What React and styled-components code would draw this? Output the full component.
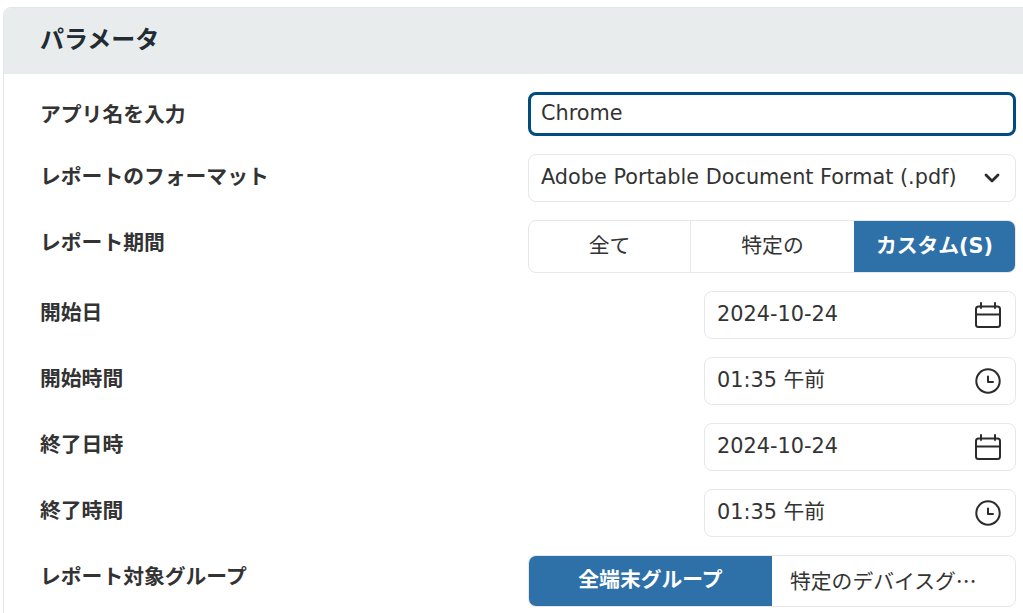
import React from 'react'
import styled, {createGlobalStyle} from 'styled-components'

const GlobalStyle = createGlobalStyle`
  html, body {
    margin: 0;
    height: 100%;
    overflow: hidden;
    background: #fff;
  }
  body {
    font-family: "DejaVu Sans", "Noto Sans CJK JP", sans-serif;
    color: #333;
  }
`;

const Panel = styled.section`
  margin: 7px -12px 0 3px;
  border: 1px solid #e4e7e9;
  border-radius: 8px 8px 0 0;
  background: #fff;
`;

const PanelHeader = styled.header`
  height: 66px;
  display: flex;
  align-items: center;
  padding: 0 0 8px 36px;
  box-sizing: border-box;
  background: #e9eced;
  border-radius: 7px 7px 0 0;
`;

const PanelTitle = styled.h2`
  margin: 0;
  font-size: 24px;
  font-weight: 700;
  color: #212b32;
`;

const PanelBody = styled.div`
  display: flex;
  flex-direction: column;
  gap: 18px;
  padding: 18px 18px 18px 36px;
`;

const Row = styled.div`
  display: flex;
  justify-content: space-between;
  align-items: flex-start;
`;

const Label = styled.label`
  font-size: 20.8px;
  font-weight: 700;
  line-height: 30px;
  padding-top: ${({$loose}) => ($loose ? '8px' : '7px')};
  color: #333;
`;

const Control = styled.div`
  width: ${({$narrow}) => ($narrow ? '312px' : '488px')};
`;

const TextInput = styled.input`
  box-sizing: border-box;
  display: block;
  width: 100%;
  height: 44px;
  padding: 0 10px 3px;
  border: 3px solid #004b7f;
  border-radius: 8px;
  outline: none;
  background: #fff;
  font: inherit;
  font-size: 20.8px;
  color: #333;
`;

const Field = styled.div`
  box-sizing: border-box;
  height: 48px;
  display: flex;
  align-items: center;
  justify-content: space-between;
  padding: 0 13px 0 12px;
  border: 1px solid #e5e7ea;
  border-radius: 8px;
  background: #fff;
  font-size: 20.8px;
  color: #333;
  white-space: nowrap;
`;

const FieldText = styled.span`
  line-height: 28px;
  padding-bottom: 3px;
`;

const SegmentGroup = styled.div`
  box-sizing: border-box;
  height: ${({$tall}) => ($tall ? '53px' : '52px')};
  line-height: ${({$tall}) => ($tall ? '50px' : '48px')};
  display: grid;
  grid-template-columns: ${({$columns}) => $columns};
  border: 1px solid #e5e7ea;
  border-radius: 8px;
  overflow: hidden;
  background: #fff;
`;

const Segment = styled.div`
  box-sizing: border-box;
  min-width: 0;
  padding: 0 18px;
  font-size: 20.8px;
  text-align: center;
  white-space: nowrap;
  overflow: hidden;
  text-overflow: ellipsis;
  color: ${({$active}) => ($active ? '#fff' : '#333')};
  background: ${({$active}) => ($active ? '#2e71a8' : 'transparent')};
  font-weight: ${({$active}) => ($active ? 700 : 400)};
  border-right: ${({$divided}) => ($divided ? '1px solid #e5e7ea' : 'none')};
`;

const Truncated = styled(Segment)`
  font-family: "Noto Sans CJK JP", sans-serif;
  text-align: left;
`;

const IconSvg = styled.svg`
  display: block;
  flex: none;
  fill: none;
  stroke: #2b2b2b;
  stroke-width: 2;
  stroke-linecap: round;
  stroke-linejoin: round;
`;

const ChevronSvg = styled(IconSvg)`
  margin-right: 2px;
  stroke-width: 2.8;
`;

const Chevron = () => (
    <ChevronSvg width="16" height="10" viewBox="0 0 16 10">
        <path d="M2 2l6 6 6-6"/>
    </ChevronSvg>
);

const CalendarIcon = () => (
    <IconSvg width="28" height="28" viewBox="0 0 28 28">
        <rect x="2" y="5.5" width="24" height="20.5" rx="2.5"/>
        <path d="M2 13.5h24M7 2v5M21 2v5"/>
    </IconSvg>
);

const ClockIcon = () => (
    <IconSvg width="28" height="28" viewBox="0 0 28 28">
        <circle cx="14" cy="14" r="11.7"/>
        <path d="M14 9.5V15h5"/>
    </IconSvg>
);

const dateRows = [
    {label: '開始日', value: '2024-10-24', icon: <CalendarIcon/>},
    {label: '開始時間', value: '01:35 午前', icon: <ClockIcon/>},
    {label: '終了日時', value: '2024-10-24', icon: <CalendarIcon/>},
    {label: '終了時間', value: '01:35 午前', icon: <ClockIcon/>},
];

const App = () => {
    return (
        <>
            <GlobalStyle/>
            <Panel>
                <PanelHeader>
                    <PanelTitle>パラメータ</PanelTitle>
                </PanelHeader>
                <PanelBody>
                    <Row>
                        <Label $loose>アプリ名を入力</Label>
                        <Control>
                            <TextInput defaultValue="Chrome"/>
                        </Control>
                    </Row>
                    <Row>
                        <Label $loose>レポートのフォーマット</Label>
                        <Control>
                            <Field>
                                <FieldText>Adobe Portable Document Format (.pdf)</FieldText>
                                <Chevron/>
                            </Field>
                        </Control>
                    </Row>
                    <Row>
                        <Label $loose>レポート期間</Label>
                        <Control>
                            <SegmentGroup $tall $columns="162px 163px 161px">
                                <Segment $divided>全て</Segment>
                                <Segment>特定の</Segment>
                                <Segment $active>カスタム(S)</Segment>
                            </SegmentGroup>
                        </Control>
                    </Row>
                    {dateRows.map((row) => (
                        <Row key={row.label}>
                            <Label>{row.label}</Label>
                            <Control $narrow>
                                <Field>
                                    <FieldText>{row.value}</FieldText>
                                    {row.icon}
                                </Field>
                            </Control>
                        </Row>
                    ))}
                    <Row>
                        <Label>レポート対象グループ</Label>
                        <Control>
                            <SegmentGroup $columns="243px 243px">
                                <Segment $active>全端末グループ</Segment>
                                <Truncated>特定のデバイスグループ</Truncated>
                            </SegmentGroup>
                        </Control>
                    </Row>
                </PanelBody>
            </Panel>
        </>
    );
};

export default App
